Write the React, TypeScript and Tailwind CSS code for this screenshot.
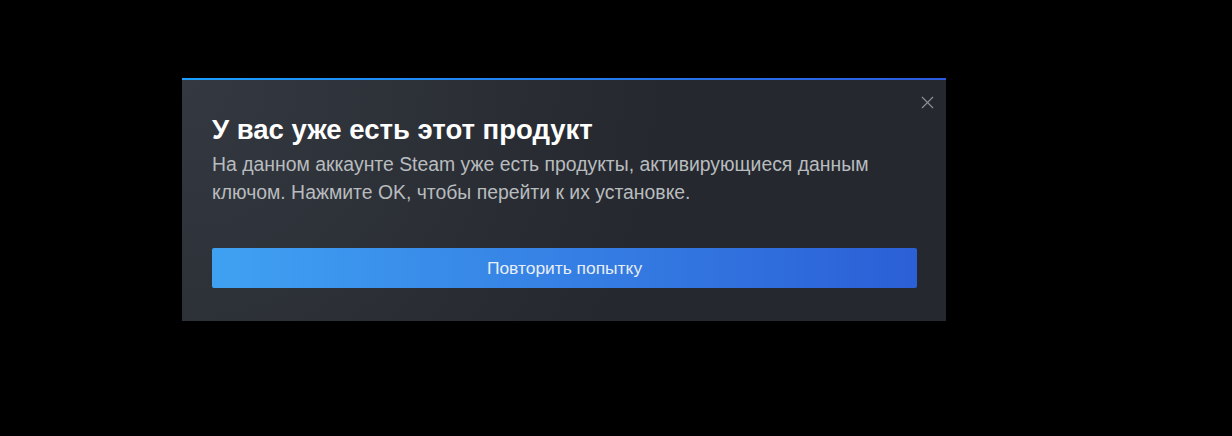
import { X } from 'lucide-react'

export default function App() {
  return (
    <div className="w-full h-[436px] bg-black pt-[78px] pl-[182px]" style={{ fontFamily: '"Liberation Sans", Arial, sans-serif' }}>
      <div className="w-[764px] bg-[#25282e]">
        <div className="h-[2px] bg-[linear-gradient(to_right,#1a9fff,#2c5be0)]" />
        <div className="relative bg-[radial-gradient(circle_at_top_left,rgba(74,81,92,0.4)_0%,rgba(75,81,92,0)_60%)] pt-[34px] pb-[33px] px-[30px]">
          <button className="absolute top-[12px] right-[8px] text-[#8b929a]">
            <X size={21} strokeWidth={1.3} />
          </button>
          <h1 className="text-[27.5px] leading-[32px] font-bold text-white">У вас уже есть этот продукт</h1>
          <p className="mt-[4px] text-[19.4px] leading-[28px] text-[#b8bcbf] w-[700px]">
            На данном аккаунте Steam уже есть продукты, активирующиеся данным ключом. Нажмите OK, чтобы перейти к их установке.
          </p>
          <button className="mt-[42px] w-[705px] h-[40px] rounded-[2px] bg-[linear-gradient(to_right,#3fa1f2,#2b5fd6)] text-[17.4px] text-[#e8eef5]">
            Повторить попытку
          </button>
        </div>
      </div>
    </div>
  )
}
